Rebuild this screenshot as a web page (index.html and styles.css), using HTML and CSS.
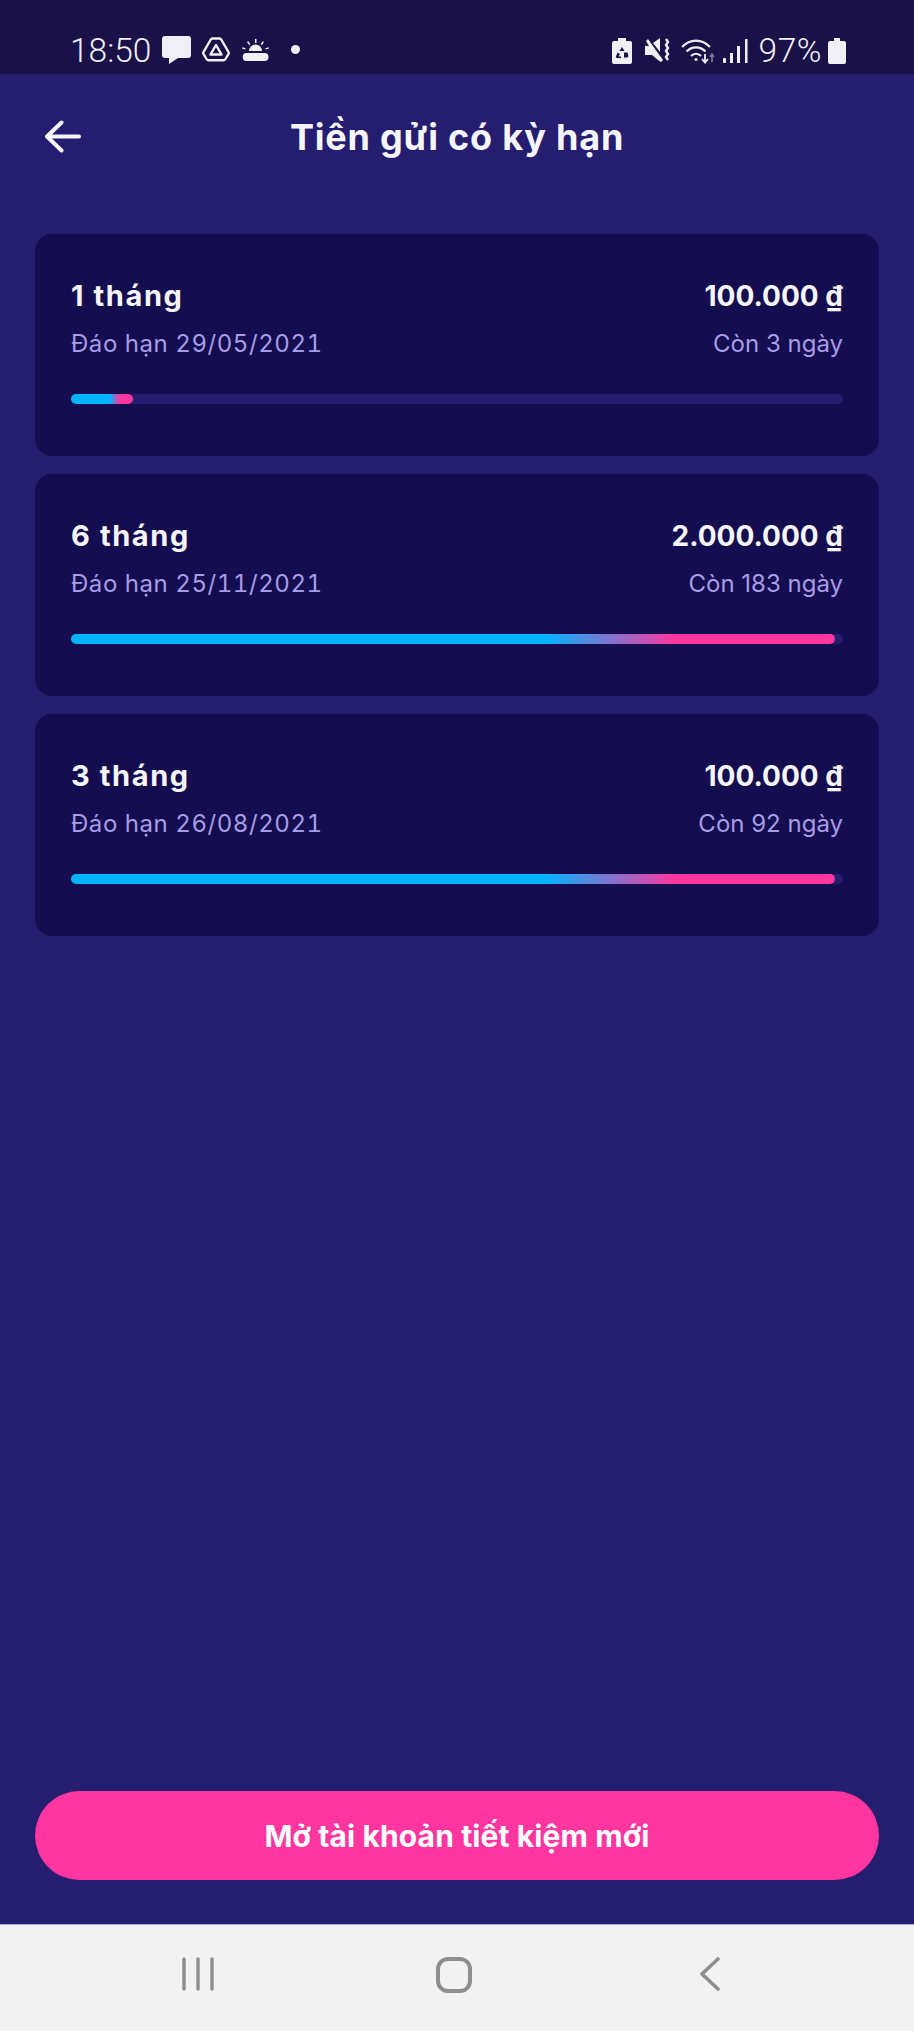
FILE: index.html
```html
<!DOCTYPE html>
<html lang="vi">

<head>
    <meta charset="UTF-8">
    <meta name="viewport" content="width=device-width, initial-scale=1.0">
    <title>Tiền gửi có kỳ hạn</title>
    <link rel="stylesheet" href="styles.css">
</head>

<body>
    <div class="phone">
        <div class="status-bar">
            <div class="status-left">
                <span class="clock">18:50</span>
                <svg class="ico-msg" width="29" height="28" viewBox="0 0 29 28"><path d="M3 0h23a3 3 0 0 1 3 3v16a3 3 0 0 1-3 3H16l-9 6v-6H3a3 3 0 0 1-3-3V3a3 3 0 0 1 3-3z" fill="#f0eff6"/></svg>
                <svg class="ico-drive" width="28" height="25" viewBox="0 0 28 25" fill="none" stroke="#f0eff6"><path d="M10.500 1.500h7a2 2 0 0 1 1.700 1l7.300 12.500a2 2 0 0 1 0 2L23.500 22a2.500 2.500 0 0 1-2 1.300h-15a2.500 2.500 0 0 1-2-1.300L1.500 17a2 2 0 0 1 0-2L8.800 2.500a2 2 0 0 1 1.700-1z" stroke-width="2.400"/><path d="M14 8l5.500 9.500h-11z" stroke-width="2.400" stroke-linejoin="round"/></svg>
                <svg class="ico-sun" width="27" height="22" viewBox="0 0 27 22" fill="#f0eff6"><path d="M7 12a6.500 6.500 0 0 1 13 0z"/><path d="M5 22a4 4 0 0 1-.5-8h18a4 4 0 0 1 0 8z"/><path d="M13 0h1.500v4H13zM5 3l1.300-.8 2 3-1.300.9zM22 3l-1.300-.8-2 3 1.300.9zM0 9.500l.5-1.300 3.200 1-.5 1.300zM27 9.500l-.5-1.300-3.200 1 .5 1.300z"/></svg>
                <span class="dot"></span>
            </div>
            <div class="status-right">
                <svg class="ico-batsave" width="20" height="26" viewBox="0 0 20 26"><path d="M6 0h8v3h4a2 2 0 0 1 2 2v19a2 2 0 0 1-2 2H2a2 2 0 0 1-2-2V5a2 2 0 0 1 2-2h4z" fill="#f0eff6"/><path d="M10 9l2.500 4h-5zM5.500 14.500l2.500 1.500-1.500 2.500H9v1.500H5a1 1 0 0 1-1-1.500zM12 14.500h3.500l1 3.500-1 1.500h-3.500z" fill="#1a1149"/></svg>
                <svg class="ico-mute" width="27" height="26" viewBox="0 0 27 26" fill="#f0eff6"><path d="M0 8h4L1 3l2-2 15 21-2 2-3-2-6-5H0zM8 5l7-5v14z"/><path d="M20 1l2 3-2 3 2 3-2 3 2 3-2 3 2 3" transform="translate(1)" fill="none" stroke="#f0eff6" stroke-width="2.400"/></svg>
                <svg class="ico-wifi" width="35" height="25" viewBox="0 0 35 25" fill="none" stroke="#f0eff6" stroke-width="2.200"><path d="M1 8c8-8.500 20-8.500 28 0"/><path d="M5.500 12.500c5.500-5.500 13.500-5.500 19 0"/><path d="M10 17c3-3 7-3 10 0"/><circle cx="15" cy="20.500" r="1.600" fill="#f0eff6" stroke="none"/><path d="M24 15v8M21 20l3 3.500 3-3.500" stroke-width="1.800"/><path d="M31 23v-7M29 18l2-3 2 3" stroke="#77748f" stroke-width="1.800"/></svg>
                <svg class="ico-signal" width="25" height="24" viewBox="0 0 25 24" fill="#f0eff6"><rect x="0" y="19" width="3" height="5" rx="1"/><rect x="7" y="14" width="3" height="10"/><rect x="14" y="7" width="3" height="17"/><rect x="22" y="0" width="2.500" height="24"/></svg>
                <span class="pct">97%</span>
                <svg class="ico-batt" width="18" height="26" viewBox="0 0 18 26"><path d="M6 0h6v3h4a2 2 0 0 1 2 2v19a2 2 0 0 1-2 2H2a2 2 0 0 1-2-2V5a2 2 0 0 1 2-2h4z" fill="#f0eff6"/></svg>
            </div>
        </div>

        <div class="app-header">
            <svg class="back" width="37" height="33" viewBox="0 0 37 33" fill="none" stroke="#f6f5fb" stroke-width="4" stroke-linecap="round" stroke-linejoin="round"><path d="M35 16.500H3M17.500 2.500L3 16.500 17.500 30.500"/></svg>
            <h1>Tiền gửi có kỳ hạn</h1>
        </div>

        <div class="content">
            <div class="deposit">
                <div class="row">
                    <span class="term">1 tháng</span>
                    <span class="amount">100.000 ₫</span>
                </div>
                <div class="row sub">
                    <span class="due">Đáo hạn 29/05/2021</span>
                    <span>Còn 3 ngày</span>
                </div>
                <div class="track"><div class="fill" style="width: 8%"></div></div>
            </div>

            <div class="deposit">
                <div class="row">
                    <span class="term">6 tháng</span>
                    <span class="amount">2.000.000 ₫</span>
                </div>
                <div class="row sub">
                    <span class="due">Đáo hạn 25/11/2021</span>
                    <span>Còn 183 ngày</span>
                </div>
                <div class="track"><div class="fill" style="width: 99%"></div></div>
            </div>

            <div class="deposit">
                <div class="row">
                    <span class="term">3 tháng</span>
                    <span class="amount">100.000 ₫</span>
                </div>
                <div class="row sub">
                    <span class="due">Đáo hạn 26/08/2021</span>
                    <span>Còn 92 ngày</span>
                </div>
                <div class="track"><div class="fill" style="width: 99%"></div></div>
            </div>

            <button class="open-btn">Mở tài khoản tiết kiệm mới</button>
        </div>

        <div class="nav-bar">
            <svg width="34" height="34" viewBox="0 0 34 34" fill="none" stroke="#8e8e8e" stroke-width="3.400" stroke-linecap="round"><path d="M3 2v30M17 2v30M31 2v30"/></svg>
            <svg class="nav-home" width="36" height="36" viewBox="0 0 36 36" fill="none" stroke="#8e8e8e" stroke-width="4"><rect x="2" y="2" width="32" height="32" rx="10"/></svg>
            <svg class="nav-back" width="20" height="34" viewBox="0 0 20 34" fill="none" stroke="#8e8e8e" stroke-width="3.600" stroke-linecap="round" stroke-linejoin="round"><path d="M18 2L2 17l16 15"/></svg>
        </div>
    </div>
</body>

</html>
```

FILE: styles.css
```css
* {
    box-sizing: border-box;
}

body {
    margin: 0;
    font-family: Inter, sans-serif;
    background-color: #251d70;
}

.phone {
    width: 914px;
    height: 2031px;
    display: flex;
    flex-direction: column;
    overflow: hidden;
}

.status-bar {
    height: 74px;
    flex-shrink: 0;
    background-color: #1a1149;
    color: #f0eff6;
    padding: 0 68px 0 70px;
    display: flex;
    justify-content: space-between;
    align-items: center;
}

.status-left,
.status-right {
    display: flex;
    align-items: center;
    height: 100%;
    padding-top: 28px;
}

.clock,
.pct {
    font-family: Roboto, sans-serif;
    font-size: 33.500px;
    font-weight: 300;
    line-height: 26px;
}

.ico-msg {
    margin-left: 11px;
    margin-top: -2px;
}

.ico-drive {
    margin-left: 11px;
    margin-top: -4px;
}

.ico-sun {
    margin-left: 12px;
    margin-top: -3px;
}

.dot {
    width: 9px;
    height: 9px;
    margin-left: 22px;
    margin-top: -3px;
    border-radius: 50%;
    background-color: #f0eff6;
}

.ico-mute {
    margin-left: 13px;
}

.ico-wifi {
    margin-left: 9px;
}

.ico-signal {
    margin-left: 7px;
}

.pct {
    margin-left: 11px;
    letter-spacing: 0.5px;
}

.ico-batt {
    margin-left: 6px;
}

.app-header {
    height: 130px;
    flex-shrink: 0;
    display: flex;
    align-items: center;
    justify-content: center;
    position: relative;
}

.app-header h1 {
    margin: 0;
    font-size: 36px;
    font-weight: 700;
    letter-spacing: 0.8px;
    color: #f6f5fb;
    position: relative;
    top: -2px;
}

.back {
    position: absolute;
    left: 44px;
    top: 46px;
}

.content {
    flex: 1;
    padding: 30px 35px 44px;
    display: flex;
    flex-direction: column;
    gap: 18px;
}

.deposit {
    height: 222px;
    padding: 46px 36px 0;
    background-color: #140d50;
    border-radius: 17px;
}

.row {
    display: flex;
    justify-content: space-between;
    line-height: 32px;
    font-size: 28px;
    font-weight: 700;
    color: #f6f5fb;
}

.term {
    font-size: 29px;
    letter-spacing: 1.600px;
}

.row.sub {
    margin-top: 16px;
    font-size: 24px;
    font-weight: 400;
    color: #a79ce6;
}

.due {
    font-variant-numeric: tabular-nums;
    letter-spacing: 0.550px;
}

.track {
    height: 10px;
    margin-top: 34px;
    border-radius: 5px;
    background-color: #251d70;
}

.fill {
    height: 100%;
    border-radius: 5px;
    background: linear-gradient(90deg, #00b4ff 62%, #ff369f 79%);
}

.open-btn {
    margin-top: auto;
    height: 89px;
    border: none;
    border-radius: 45px;
    background-color: #ff369f;
    color: #fff;
    font-family: Inter, sans-serif;
    font-size: 30px;
    font-weight: 700;
    letter-spacing: 0.120px;
}

.nav-bar {
    height: 107px;
    flex-shrink: 0;
    background-color: #f2f2f2;
    border-top: 1px solid #a9a5d0;
    display: flex;
    padding: 32px 0 0 181px;
    align-items: flex-start;
}

.nav-home {
    margin-left: 221px;
}

.nav-back {
    margin-left: 228px;
}
```
